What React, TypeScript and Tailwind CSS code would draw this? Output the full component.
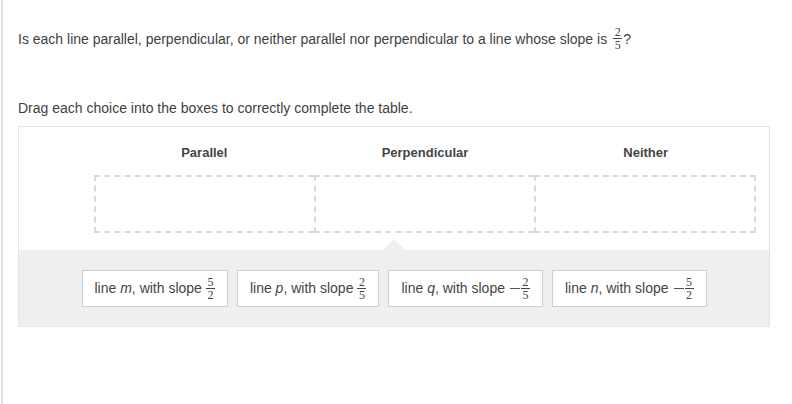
import React from 'react'

function Frac({ num, den, className = '' }: { num: string; den: string; className?: string }) {
  return (
    <span className={`inline-flex flex-col items-center align-middle font-['Liberation_Serif',serif] text-[12px] leading-[10px] ${className}`}>
      <span>{num}</span>
      <span className="my-[1px] h-px w-[9px] bg-current" />
      <span>{den}</span>
    </span>
  )
}

function Choice({ v, num, den, neg }: { v: string; num: string; den: string; neg?: boolean }) {
  return (
    <div className="flex h-[37px] items-center border border-[#cfcfcf] bg-white px-3 text-[#454545]">
      <span>
        line <i>{v}</i>, with slope
      </span>
      {neg && <span className="ml-[5px] inline-block h-px w-[10px] bg-[#555]" />}
      <Frac num={num} den={den} className={neg ? 'ml-[1px]' : 'ml-[4px]'} />
    </div>
  )
}

export default function App() {
  const columns = ['Parallel', 'Perpendicular', 'Neither']

  return (
    <div className="ml-px min-h-[404px] border-l-2 border-[#e2e2e2] bg-white pl-[15px] pr-[22px] font-['Liberation_Sans',Arial,sans-serif] text-[14px] text-[#3f3f3f]">
      {/* Prompt */}
      <p className="flex items-center pt-[27px] leading-[20px]">
        <span>Is each line parallel, perpendicular, or neither parallel nor perpendicular to a line whose slope is</span>
        <Frac num="2" den="5" className="ml-[6px] text-[#444]" />
        <span className="ml-[1px]">?</span>
      </p>

      <p className="mt-[48px] leading-[20px]">Drag each choice into the boxes to correctly complete the table.</p>

      {/* Table */}
      <div className="mt-[8px] border border-[#e4e4e4]">
        <div className="pb-[17px] pl-[75px] pr-[13px] pt-[18px]">
          <div className="flex">
            {columns.map(c => (
              <div key={c} className="flex-1 text-center text-[13px] font-bold leading-[16px] text-[#454545]">
                {c}
              </div>
            ))}
          </div>
          <div className="mt-[14px] flex">
            {columns.map((c, i) => (
              <div
                key={c}
                className={`h-[58px] flex-1 border-y-2 border-l-2 border-dashed border-[#dadada] ${i === 2 ? 'border-r-2' : ''}`}
              />
            ))}
          </div>
        </div>

        {/* Choices */}
        <div className="relative flex justify-center gap-[9px] bg-[#efefef] pb-[19px] pt-[20px]">
          <span className="absolute left-1/2 top-[-11px] -translate-x-1/2 border-x-[11px] border-b-[11px] border-x-transparent border-b-[#efefef]" />
          <Choice v="m" num="5" den="2" />
          <Choice v="p" num="2" den="5" />
          <Choice v="q" num="2" den="5" neg />
          <Choice v="n" num="5" den="2" neg />
        </div>
      </div>
    </div>
  )
}
